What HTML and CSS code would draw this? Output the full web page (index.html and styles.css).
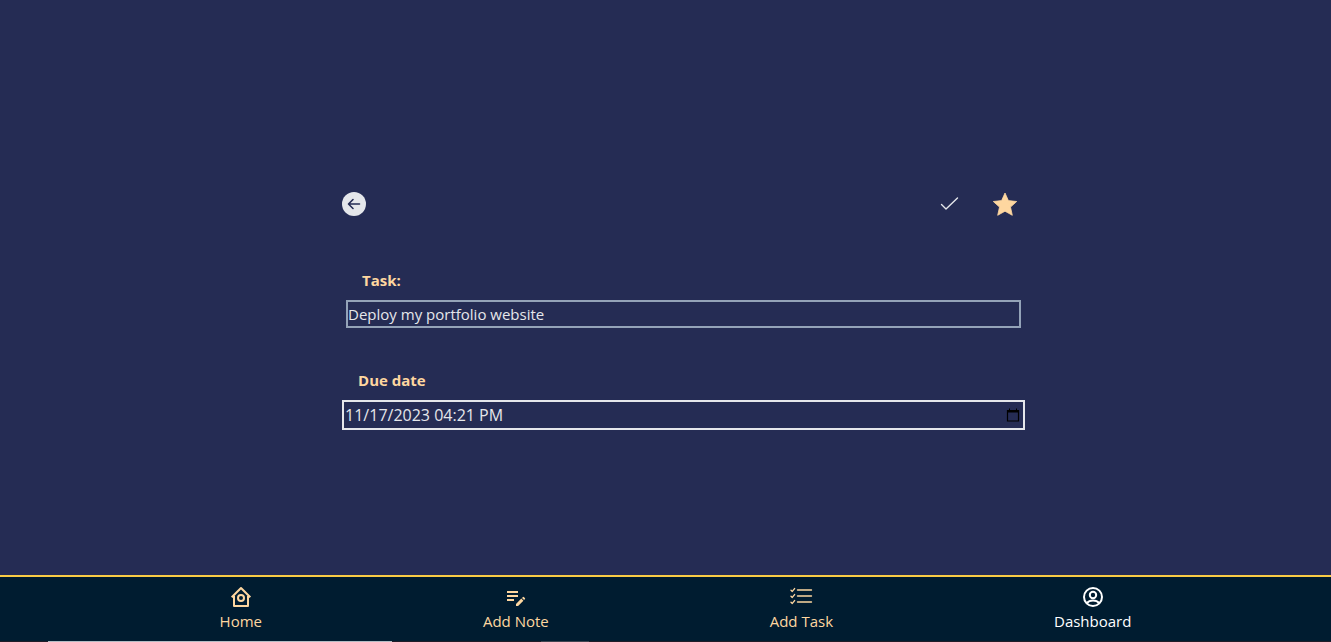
FILE: index.html
```html
<!DOCTYPE html>
<html lang="en-US">
<head>
<meta charset="utf-8">
<meta name="viewport" content="width=device-width, initial-scale=1">
<title>Task</title>
<link rel="stylesheet" href="styles.css">
</head>
<body>
<main class="page">
  <form class="task-form">
    <div class="toolbar">
      <button class="icon-button" type="button" aria-label="Back">
        <svg width="24" height="24" viewBox="0 0 24 24"><circle cx="12" cy="12" r="12" fill="#e5e7eb"/><path d="M17.500 12H6.800M11 7.500l-4.500 4.500 4.500 4.500" fill="none" stroke="#252c54" stroke-width="1.6" stroke-linecap="round" stroke-linejoin="round"/></svg>
      </button>
      <div class="actions">
        <button class="icon-button" type="button" aria-label="Mark as done">
          <svg width="24" height="24" viewBox="0 0 24 24"><path d="M4.500 12.500l4.500 4.500L20.500 6" fill="none" stroke="#e5e7eb" stroke-width="1.4" stroke-linecap="round" stroke-linejoin="round"/></svg>
        </button>
        <button class="icon-button" type="button" aria-label="Favourite">
          <svg width="24" height="24" viewBox="0 0 24 24"><path d="M12 1l3.400 7.600 8.300.9-6.200 5.600 1.800 8.200L12 19.200l-7.300 4.100 1.800-8.200L.3 9.500l8.300-.9z" fill="#fed7a0" stroke="#fed7a0" stroke-width=".8" stroke-linejoin="round"/></svg>
        </button>
      </div>
    </div>
    <div class="field field-task">
      <label class="label" for="task">Task:</label>
      <input class="input input-task" id="task" type="text" value="Deploy my portfolio website">
    </div>
    <div class="field field-due">
      <label class="label" for="due">Due date</label>
      <div class="date-box">
        <input class="date-input" id="due" type="text" value="11/17/2023 04:21 PM">
        <button class="icon-button" type="button" aria-label="Choose a date">
          <svg width="14" height="16" viewBox="0 0 14 16"><path d="M1.500 3.500h11v10.500h-11z" fill="none" stroke="#000" stroke-width="1.200"/><path d="M1 3h12v2.500H1zM3 1.500h1V3H3zM10 1.500h1V3h-1z"/></svg>
        </button>
      </div>
    </div>
  </form>
</main>
<nav class="nav">
  <a class="nav-link" href="#home">
    <svg width="24" height="24" viewBox="0 0 24 24" fill="none" stroke="currentColor" stroke-width="2" stroke-linejoin="round"><path d="M2.700 12.300L12 3l9.300 9.300M5 11v10h14V11"/><circle cx="12" cy="13" r="3"/></svg>
    <span>Home</span>
  </a>
  <a class="nav-link" href="#add-note">
    <svg width="24" height="24" viewBox="0 0 24 24" fill="currentColor"><path d="M3 6h11v2H3zM3 10h11v2H3zM3 14h7v2H3zM18 12.9l.7-.7a1 1 0 0 1 1.4 0l.7.7a1 1 0 0 1 0 1.4l-.7.7zM17.3 13.6L12 18.9V21h2.1l5.3-5.3z"/></svg>
    <span>Add Note</span>
  </a>
  <a class="nav-link" href="#add-task">
    <svg width="24" height="24" viewBox="0 0 24 24" fill="none" stroke="currentColor" stroke-width="1.4" stroke-linecap="round" stroke-linejoin="round"><path d="M8.5 5h14M8.5 11h14M8.5 17h14M2 5.2l1.3 1.2 2.3-2.8M2 11.2l1.3 1.2 2.3-2.8M2 17.2l1.3 1.2 2.3-2.8"/></svg>
    <span>Add Task</span>
  </a>
  <a class="nav-link nav-link-active" href="#dashboard">
    <svg width="24" height="24" viewBox="0 0 24 24" fill="none" stroke="currentColor" stroke-width="2"><circle cx="12" cy="12" r="9"/><circle cx="12" cy="10" r="3.2"/><path d="M5.8 18c1.5-1.8 3.7-2.6 6.2-2.6s4.700.8 6.200 2.600"/></svg>
    <span>Dashboard</span>
  </a>
</nav>
<div class="edge"></div>
</body>
</html>
```
FILE: styles.css
```css
* {
  box-sizing: border-box;
}

body {
  margin: 0;
  min-height: 100vh;
  display: flex;
  flex-direction: column;
  background: #252c54;
  color: #e5e7eb;
  font: 15px/24px "Segoe UI", "Open Sans", "Noto Sans", sans-serif;
}

.page {
  flex: 1;
  display: flex;
  flex-direction: column;
  justify-content: center;
  padding-top: 47px;
}

.task-form {
  width: 51.3%;
  margin-left: 25.7%;
}

.toolbar {
  display: flex;
  justify-content: space-between;
  padding-right: 8px;
}

.actions {
  display: flex;
  gap: 32px;
}

.icon-button {
  display: block;
  padding: 0;
  border: 0;
  background: none;
}

.icon-button svg,
.nav-link svg {
  display: block;
}

.field {
  display: flex;
  flex-direction: column;
  gap: 8px;
}

.field-task {
  margin-top: 52px;
  padding: 0 4px;
}

.field-due {
  margin-top: 40px;
}

.label {
  padding-left: 16px;
  color: #fed7a0;
  font-weight: 700;
}

.input {
  width: 100%;
  margin: 0;
  padding: 0;
  border: 2px solid #94a3b8;
  border-radius: 0;
  background: transparent;
  color: inherit;
  font: inherit;
}

.date-box {
  display: flex;
  align-items: center;
  padding: 1px 3px 1px 1px;
  border: 2px solid #e5e7eb;
}

.date-input {
  flex: 1;
  min-width: 0;
  padding: 0;
  border: 0;
  background: transparent;
  color: inherit;
  font: inherit;
  font-size: 16px;
}

.nav {
  display: flex;
  justify-content: center;
  gap: 16.6vw;
  padding: 8px 0 8px 20px;
  border-top: 2px solid #facc45;
  background: #001c30;
}

.nav-link {
  display: flex;
  flex-direction: column;
  align-items: center;
  color: #fed7a0;
  text-decoration: none;
}

.nav-link-active {
  color: #ffffff;
}

.edge {
  height: 1px;
  background: linear-gradient(90deg, #201c28 48px, #b4bcc4 48px 392px, #201c28 392px 541px, #404450 541px 589px, #201c28 589px);
}
```
